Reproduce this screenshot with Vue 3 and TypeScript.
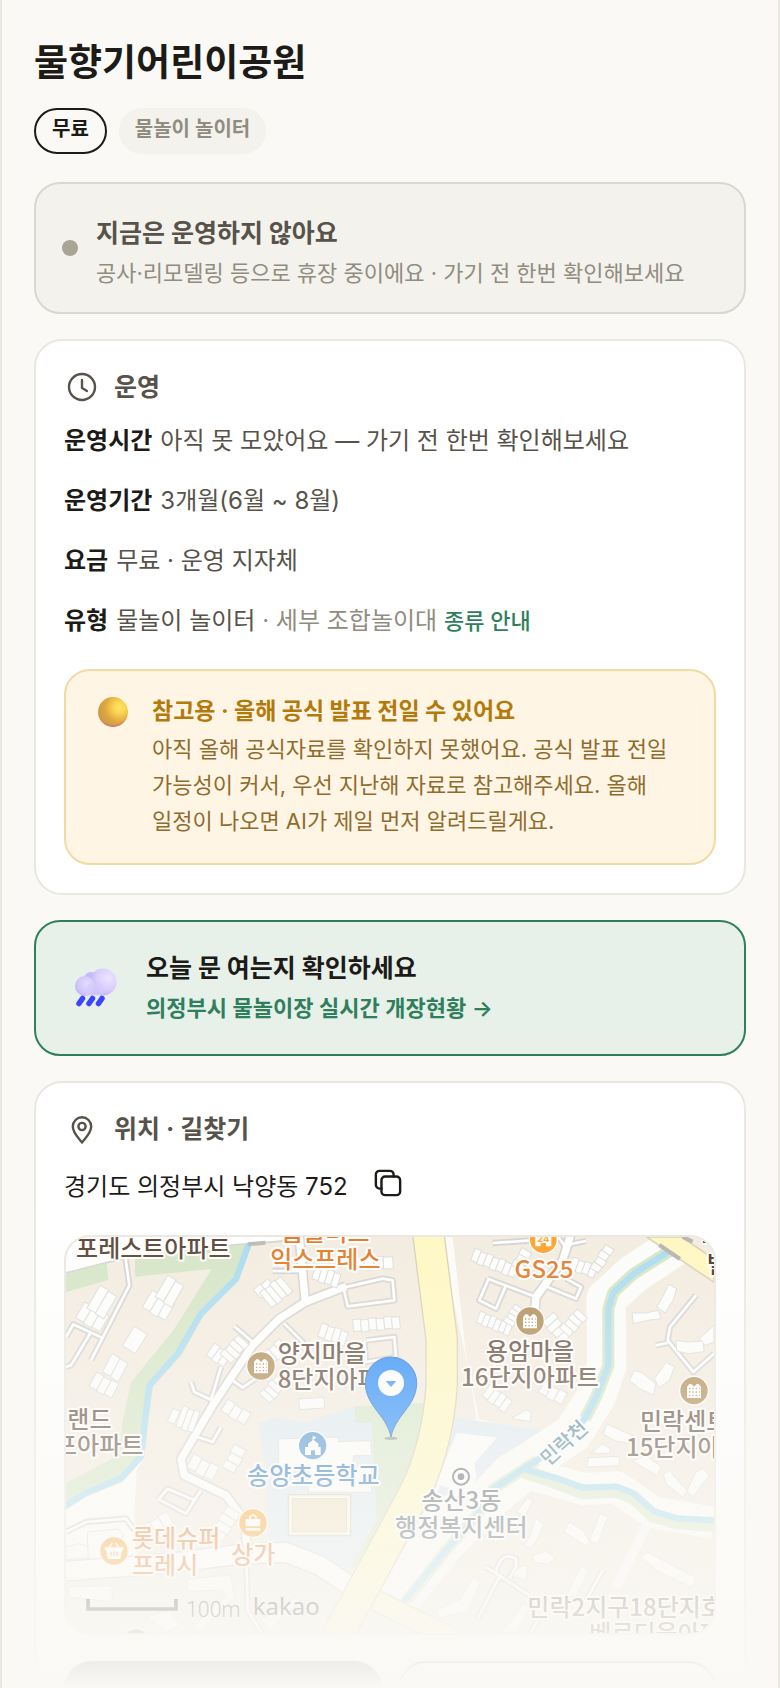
<script setup lang="ts">
import { ref } from 'vue'

interface HouseRow {
  x: number
  y: number
  w: number
  h: number
  n: number
  a: number
}
interface Label {
  x: number
  y: number
  lines: string[]
  color: string
  anchor?: 'start' | 'middle' | 'end'
}

const place = {
  name: '물향기어린이공원',
  address: '경기도 의정부시 낙양동 752',
}

const copied = ref(false)
function copyAddress() {
  navigator.clipboard?.writeText(place.address)
  copied.value = true
}

const lanes: string[] = [
  'M178 60 L190 145 L75 370',
  'M0 300 L22 262 L112 304',
  'M75 285 L15 385 L0 390',
  'M620 102 L702 102',
  'M505 268 L560 315',
  'M655 260 L715 320',
  'M832 150 L845 208 L985 190 L980 130 L950 125 L832 152',
  'M900 310 L985 300 L990 360 L900 375 L895 312',
  'M375 435 L385 465 L435 488 L465 390',
  'M500 430 L530 452 L590 410',
  'M395 600 L440 615 L465 570',
  'M275 790 L305 755 L385 790 L360 830 L280 788',
  'M385 790 L405 760',
  'M0 885 L60 855 L180 845 L205 880',
  'M542 990 L545 1120 L585 1186',
  'M1280 18 L1430 8',
  'M1265 125 L1410 180',
  'M1268 125 L1240 190 L1290 215 L1320 145',
  'M1445 150 L1530 185 L1545 150 L1500 125',
  'M1890 175 L1812 270 L1805 310 L1882 405 L1944 350',
  'M1770 325 L1805 318',
  'M1260 990 L1390 1075',
  'M1305 1010 L1235 1145',
  'M1290 1005 Q1305 940 1350 965 L1350 990 L1330 1025',
  'M1610 1000 L1560 1090',
  'M1425 1130 L1395 1186',
  'M1470 -10 L1495 25 L1560 12',
]

const streets: string[] = [
  'M700 0 L718 195 M718 195 L640 245 L560 325 L440 505 L345 666 L355 715 L480 775 L535 850 L545 950',
  'M718 195 L840 148',
  'M1515 -10 L1490 70 L1410 180 L1405 240',
]

const rows: HouseRow[] = [
  { x: 56, y: 195, w: 84, h: 54, n: 3, a: 30 },
  { x: 102, y: 145, w: 60, h: 78, n: 2, a: 30 },
  { x: 258, y: 160, w: 80, h: 58, n: 3, a: 30 },
  { x: 305, y: 115, w: 58, h: 74, n: 2, a: 30 },
  { x: 205, y: 268, w: 46, h: 68, n: 1, a: 32 },
  { x: 92, y: 405, w: 76, h: 48, n: 3, a: 28 },
  { x: 138, y: 350, w: 56, h: 62, n: 2, a: 28 },
  { x: 562, y: 158, w: 54, h: 34, n: 2, a: -40 },
  { x: 580, y: 168, w: 80, h: 58, n: 4, a: -40 },
  { x: 446, y: 318, w: 62, h: 44, n: 3, a: 35 },
  { x: 462, y: 350, w: 78, h: 44, n: 4, a: -48 },
  { x: 580, y: 470, w: 75, h: 42, n: 4, a: -48 },
  { x: 590, y: 350, w: 66, h: 42, n: 3, a: -42 },
  { x: 750, y: 85, w: 80, h: 42, n: 4, a: 18 },
  { x: 865, y: 62, w: 115, h: 36, n: 4, a: -3 },
  { x: 768, y: 258, w: 84, h: 42, n: 4, a: 18 },
  { x: 860, y: 248, w: 140, h: 36, n: 6, a: -5 },
  { x: 322, y: 514, w: 70, h: 42, n: 3, a: 25 },
  { x: 352, y: 506, w: 54, h: 66, n: 3, a: 20 },
  { x: 486, y: 486, w: 82, h: 40, n: 3, a: 32 },
  { x: 698, y: 486, w: 76, h: 32, n: 1, a: -4 },
  { x: 384, y: 650, w: 86, h: 46, n: 3, a: 28 },
  { x: 468, y: 690, w: 78, h: 40, n: 3, a: -62 },
  { x: 224, y: 868, w: 90, h: 40, n: 3, a: -30 },
  { x: 430, y: 890, w: 100, h: 46, n: 4, a: -58 },
  { x: 1228, y: 34, w: 140, h: 38, n: 7, a: 22 },
  { x: 1336, y: 84, w: 62, h: 34, n: 3, a: -58 },
  { x: 1522, y: 60, w: 78, h: 36, n: 4, a: 20 },
  { x: 1572, y: 92, w: 84, h: 30, n: 4, a: -58 },
  { x: 1244, y: 222, w: 105, h: 36, n: 6, a: 22 },
  { x: 1312, y: 252, w: 62, h: 34, n: 4, a: -58 },
  { x: 1462, y: 226, w: 86, h: 44, n: 4, a: 48 },
  { x: 1480, y: 272, w: 78, h: 40, n: 4, a: -48 },
  { x: 1272, y: 442, w: 84, h: 42, n: 4, a: 35 },
  { x: 1435, y: 432, w: 78, h: 38, n: 3, a: 28 },
]

const buildings: string[] = [
  'M1698 228 L1740 228 L1776 220 L1786 245 L1745 250 L1702 260 Z',
  'M1772 210 L1790 180 L1808 142 L1832 155 L1822 188 L1798 228 Z',
  'M1830 310 L1862 315 L1912 312 L1914 344 L1868 350 L1832 342 Z',
  'M1900 305 L1944 265 L1944 315 L1918 325 Z',
  'M1705 400 L1730 408 L1770 440 L1762 474 L1720 455 L1690 430 Z',
  'M1765 425 L1800 376 L1826 390 L1810 430 L1780 452 Z',
  'M1336 545 L1380 518 L1396 526 L1394 554 Z',
  'M1622 560 L1660 578 L1700 595 L1690 620 L1650 612 L1612 592 Z',
  'M1576 648 L1610 620 L1636 638 L1628 650 Z',
  'M1566 662 L1660 658 L1660 686 L1562 690 Z',
  'M1700 672 L1740 655 L1786 690 L1772 716 Z',
  'M1792 712 L1810 700 L1862 760 L1852 782 L1800 740 Z',
  'M1862 762 L1890 705 L1910 694 L1930 715 L1880 780 Z',
  'M1350 826 L1385 782 L1402 790 L1378 835 Z',
  'M1390 900 L1410 845 L1434 860 L1412 910 L1395 934 L1375 925 Z',
  'M1494 885 L1510 855 L1550 880 L1572 915 L1560 926 Z',
  'M1570 910 L1602 830 L1626 840 L1595 920 Z',
  'M1400 955 L1440 942 L1468 965 L1445 982 L1402 975 Z',
  'M1724 960 L1745 946 L1890 1022 L1880 1052 L1780 1005 Z',
  'M1340 1010 L1370 985 L1386 990 L1378 1030 L1350 1020 Z',
  'M1112 1120 L1185 1085 L1222 1020 L1244 1035 L1205 1125 L1120 1142 Z',
  'M1500 1080 L1545 985 L1568 1000 L1530 1080 Z',
  'M1310 1186 L1370 1100 L1390 1115 L1350 1186 Z',
  'M5 1050 L138 1046 L138 1094 L8 1080 Z',
  'M64 885 L155 876 L170 890 L170 960 L66 966 Z',
  'M0 930 L40 920 L66 930 L66 962 L0 968 Z',
  'M365 1026 L495 1014 L505 1080 L400 1186 L380 1170 L478 1080 L470 1060 L365 1062 Z',
  'M242 1140 L310 1120 L345 1165 L300 1186 Z',
  'M585 1150 L690 1080 L702 1090 L610 1180 Z',
]

const apartmentColor = '#5d4637'
const shopColor = '#e1741b'

const labels: Label[] = [
  { x: 262, y: 60, lines: ['포레스트아파트'], color: '#553c2d', anchor: 'middle' },
  { x: 778, y: 12, lines: ['홈플러스', '익스프레스'], color: shopColor, anchor: 'middle' },
  { x: 635, y: 374, lines: ['양지마을', '8단지아파트'], color: apartmentColor },
  { x: 1434, y: 122, lines: ['GS25'], color: shopColor, anchor: 'middle' },
  { x: 1392, y: 368, lines: ['용암마을', '16단지아파트'], color: apartmentColor, anchor: 'middle' },
  { x: 1722, y: 578, lines: ['민락센트럴'], color: apartmentColor },
  { x: 1680, y: 658, lines: ['15단지아파트'], color: apartmentColor },
  { x: 4, y: 572, lines: ['랜드'], color: apartmentColor },
  { x: 232, y: 652, lines: ['에코프아파트'], color: apartmentColor, anchor: 'end' },
  { x: 742, y: 742, lines: ['송양초등학교'], color: '#2272bd', anchor: 'middle' },
  { x: 1186, y: 816, lines: ['송산3동', '행정복지센터'], color: '#4d5a64', anchor: 'middle' },
  { x: 198, y: 930, lines: ['롯데슈퍼', '프레시'], color: shopColor },
  { x: 562, y: 978, lines: ['상가'], color: shopColor, anchor: 'middle' },
  { x: 1384, y: 1136, lines: ['민락2지구18단지호반'], color: apartmentColor },
  { x: 1570, y: 1216, lines: ['베르디움아파트'], color: apartmentColor },
]

const apartments = [
  { x: 585, y: 387 },
  { x: 1392, y: 252 },
  { x: 1884, y: 461 },
  { x: 210, y: 1218 },
]
</script>

<template>
  <main class="page">
    <header class="intro">
      <h1>{{ place.name }}</h1>
      <ul class="chips">
        <li class="chip chip-strong">무료</li>
        <li class="chip">물놀이 놀이터</li>
      </ul>
    </header>

    <section class="status">
      <span class="dot"></span>
      <div class="status-text">
        <h2>지금은 운영하지 않아요</h2>
        <p>공사·리모델링 등으로 휴장 중이에요 · 가기 전 한번 확인해보세요</p>
      </div>
    </section>

    <section class="card">
      <h2 class="card-title">
        <svg viewBox="0 0 36 36" aria-hidden="true">
          <circle cx="18" cy="18" r="13" />
          <path d="M18 11v8l5 3" />
        </svg>
        운영
      </h2>
      <dl class="facts">
        <div>
          <dt>운영시간</dt>
          <dd>아직 못 모았어요 — 가기 전 한번 확인해보세요</dd>
        </div>
        <div>
          <dt>운영기간</dt>
          <dd>3개월(6월 ~ 8월)</dd>
        </div>
        <div>
          <dt>요금</dt>
          <dd>무료 · 운영 지자체</dd>
        </div>
        <div>
          <dt>유형</dt>
          <dd>물놀이 놀이터 <span class="muted">· 세부 조합놀이대</span> <a href="#types">종류 안내</a></dd>
        </div>
      </dl>
      <aside class="notice">
        <svg class="ball" viewBox="0 0 30 30" aria-hidden="true">
          <defs>
            <radialGradient id="ballBase" cx="0.72" cy="0.35" r="0.75">
              <stop offset="0" stop-color="#ffe562" />
              <stop offset="0.25" stop-color="#fbd654" />
              <stop offset="0.65" stop-color="#dfa73f" />
              <stop offset="1" stop-color="#c99a4e" />
            </radialGradient>
            <radialGradient id="ballShade" cx="0.5" cy="0.32" r="0.7">
              <stop offset="0.82" stop-color="#cc6a6a" stop-opacity="0" />
              <stop offset="1" stop-color="#cc6a70" stop-opacity="0.9" />
            </radialGradient>
          </defs>
          <circle cx="15" cy="15" r="15" fill="url(#ballBase)" />
          <circle cx="15" cy="15" r="15" fill="url(#ballShade)" />
        </svg>
        <div>
          <h3>참고용 · 올해 공식 발표 전일 수 있어요</h3>
          <p>아직 올해 공식자료를 확인하지 못했어요. 공식 발표 전일 가능성이 커서, 우선 지난해 자료로 참고해주세요. 올해 일정이 나오면 AI가 제일 먼저 알려드릴게요.</p>
        </div>
      </aside>
    </section>

    <a class="live" href="#live">
      <svg class="cloud" viewBox="0 0 44 40" aria-hidden="true">
        <defs>
          <radialGradient id="cloudBig" cx="0.7" cy="0.35" r="0.75">
            <stop offset="0" stop-color="#eee4ff" />
            <stop offset="0.6" stop-color="#d8cdfb" />
            <stop offset="1" stop-color="#b9aef6" />
          </radialGradient>
          <radialGradient id="cloudSmall" cx="0.6" cy="0.4" r="0.7">
            <stop offset="0" stop-color="#e6dcff" />
            <stop offset="0.7" stop-color="#cfc5fb" />
            <stop offset="1" stop-color="#b4acf5" />
          </radialGradient>
        </defs>
        <circle cx="17" cy="11" r="7" fill="#c4bbfb" />
        <path d="M11 17h18v10H11z" fill="#cbc1fa" />
        <circle cx="29" cy="14" r="13.5" fill="url(#cloudBig)" />
        <circle cx="11" cy="18" r="10" fill="url(#cloudSmall)" />
        <path d="M14 16h15v11.500H12z" fill="#d5cbfc" opacity="0.7" />
        <path
          d="M8.500 30.500l-3.500 5M18.500 30.500l-3.500 5M28 30.500l-3.500 5"
          stroke="#3b46ff"
          stroke-width="5.500"
          stroke-linecap="round"
        />
      </svg>
      <span class="live-text">
        <strong>오늘 문 여는지 확인하세요</strong>
        <span>의정부시 물놀이장 실시간 개장현황 →</span>
      </span>
    </a>

    <section class="card">
      <h2 class="card-title">
        <svg viewBox="0 0 36 36" aria-hidden="true">
          <path d="M18 31.500C15 27.500 8.800 22 8.800 15.500a9.200 9.200 0 0 1 18.400 0C27.200 22 21 27.500 18 31.500z" />
          <circle cx="18" cy="15.500" r="3.600" />
        </svg>
        위치 · 길찾기
      </h2>
      <p class="address">
        {{ place.address }}
        <button class="copy" type="button" :aria-label="copied ? '복사됨' : '주소 복사'" @click="copyAddress">
          <svg viewBox="0 0 30 30" aria-hidden="true">
            <path d="M8 21H6a4 4 0 0 1-4-4V6a4 4 0 0 1 4-4h11a4 4 0 0 1 4 4v2" />
            <rect x="8" y="8" width="20" height="20" rx="4" />
          </svg>
        </button>
      </p>

      <div class="map">
        <svg viewBox="0 0 1944 1188" preserveAspectRatio="xMidYMid slice" role="img" aria-label="지도">
          <rect width="1944" height="1188" fill="#f3ebdf" />
          <path d="M0 1010 L520 975 L700 965 L860 1050 L760 1188 L0 1188Z" fill="#f0ece2" />

          <path d="M0 0 H900 L700 8 L505 24 L180 62 L0 108Z" fill="#fff" />
          <path d="M0 108 L180 62 L505 24 L700 8" fill="none" stroke="#d6d4d1" stroke-width="6" />
          <path d="M0 112 L122 78 L127 128 L0 166Z" fill="#d3e4c4" />
          <path
            d="M207 56 L505 26 L557 20 L517 126 L412 236 L347 354 L262 446 L248 540 L236 660 L170 735 L52 782 L0 818 L0 738 L130 670 L162 640 L168 560 L195 436 L325 276 L437 96 L207 119Z"
            fill="#d3e4c4"
          />
          <path d="M0 818 L52 782 L170 735 L236 660 L212 700 L204 840 L215 960 L0 980Z" fill="#fdfdfb" />
          <path
            d="M548 22 L510 126 L405 230 L335 350 L250 446 L238 540 L224 660 L168 722 L60 768 L0 806"
            class="water"
          />
          <path d="M545 22 L598 17" stroke="#b9b7b3" stroke-width="12" />

          <path
            d="M577 560 L622 542 L720 556 L867 508 L940 508 L930 850 L860 1000 L700 935 L608 920 L602 720Z"
            fill="#dfe9f1"
          />
          <path
            d="M867 508 L1078 498 L1067 566 L1035 680 L1002 756 L880 996 L852 990 L932 850 L925 700 L918 558 L867 558Z"
            fill="#d6e6c8"
          />
          <path d="M638 606 L817 600 L817 614 L914 611 L917 656 L862 656 L862 686 L917 686 L917 766 L727 766 L727 700 L638 700Z" fill="#fdfdfc" stroke="#dcdcdc" stroke-width="3" />
          <rect x="667" y="773" width="187" height="123" fill="#fbf8ef" stroke="#d9ccb0" stroke-width="4" />
          <rect x="679" y="785" width="163" height="99" fill="#efe2c2" stroke="#e3d3ab" stroke-width="3" />

          <path d="M1120 0 H1160 L1200 350 L1232 546 L1180 560 L1100 780 L940 1070 L1040 1120 L1300 830 L1440 600 L1240 546Z" fill="#fcfbf8" />
          <path d="M1167 541 L1432 581 L1300 660 L1232 730 L1110 790 L1150 640Z" fill="#dfe9f1" />
          <path d="M1172 588 L1292 602 L1225 680 L1232 720 L1200 770 L1110 740Z" fill="#fdfdfc" />

          <g fill="none" stroke-linejoin="round">
            <path d="M1840 20 L1702 111 L1620 186 L1622 386 L1592 476 L1520 590 L1412 660" stroke="#fcfcfa" stroke-width="118" />
            <path d="M1412 690 L1290 790 L1152 926 L1022 1086" stroke="#fcfcfa" stroke-width="90" />
            <path d="M1372 706 L1552 756 L1652 751 L1762 826 L1944 858" stroke="#fcfcfa" stroke-width="96" />
            <path d="M1752 846 L1650 1050" stroke="#fbfaf6" stroke-width="26" />
            <path d="M1822 35 L1702 111 L1642 166 L1627 216 L1627 386 L1592 476 L1557 545" stroke="#d3e4c4" stroke-width="36" />
            <path d="M1412 671 L1282 756 L1232 836 L1152 926 L1022 1090" stroke="#dce8cb" stroke-width="34" />
            <path d="M1372 702 L1472 736 L1552 766 L1652 761 L1702 781 L1762 836 L1832 856 L1944 864" stroke="#dce8cb" stroke-width="42" />
            <path d="M1822 35 L1702 111 L1642 166 L1627 216 L1627 386 L1592 476 L1557 545 L1500 610 L1412 671 L1372 696 L1282 756 L1232 836 L1152 926 L1012 1096" class="water" />
            <path d="M1372 696 L1472 724 L1552 752 L1652 749 L1702 769 L1762 822 L1832 844 L1944 850" class="water" />
          </g>

          <path d="M1742 0 H1847 L1944 66 V136Z" fill="#fff6bd" stroke="#d8d0b4" stroke-width="5" />
          <path d="M1780 24 L1842 66 M1850 0 L1880 14" stroke="#b3b0ab" stroke-width="12" />

          <path d="M0 1002 L300 980 L520 952 L660 946 L760 985 L880 1065" class="avenue-edge" />
          <path d="M0 1002 L300 980 L520 952 L660 946 L760 985 L880 1065" class="avenue" />

          <path v-for="d in lanes" :key="`edge-${d}`" :d="d" class="lane-edge" />
          <path v-for="d in streets" :key="`edge-${d}`" :d="d" class="street-edge" />
          <path v-for="d in lanes" :key="d" :d="d" class="lane" />
          <path v-for="d in streets" :key="d" :d="d" class="street" />

          <path
            d="M1087 -10 L1127 306 L1127 446 Q1115 620 1052 755 L940 965 L812 1200"
            fill="none"
            stroke="#d6cdb4"
            stroke-width="98"
          />
          <path d="M930 1090 L1170 1210" fill="none" stroke="#d6cdb4" stroke-width="66" />
          <path d="M930 1090 L1170 1210" fill="none" stroke="#fff5c4" stroke-width="58" />
          <path d="M1087 -10 L1127 306 L1127 446 Q1115 620 1052 755 L940 965 L812 1200" fill="none" stroke="#fff8c0" stroke-width="90" />

          <g class="building">
            <g v-for="(r, i) in rows" :key="i" :transform="`translate(${r.x} ${r.y}) rotate(${r.a})`">
              <rect
                v-for="k in r.n"
                :key="k"
                :x="((k - 1) * r.w) / r.n"
                :y="k % 2 ? 0 : 3"
                :width="r.w / r.n"
                :height="r.h"
              />
            </g>
            <path v-for="d in buildings" :key="d" :d="d" />
          </g>

          <g v-for="p in apartments" :key="`${p.x}-${p.y}`" :transform="`translate(${p.x} ${p.y})`">
            <circle r="43" fill="#ad8850" stroke="#fff" stroke-width="4" />
            <path d="M-21 22V-12L-14 -20H-8L0 -12L8 -20H14L21 -12V22Z" fill="#fff" />
            <path d="M-15 -6H17M-15 4H17M-15 14H17" stroke="#ad8850" stroke-width="4" stroke-dasharray="4 6" />
          </g>

          <g transform="translate(1432 8)">
            <circle r="42" fill="#fb9f23" stroke="#fff" stroke-width="4" />
            <path d="M-24 -40H24V20H8V10H-8V20H-24Z" fill="#fff" />
            <text class="shop-num" y="8" text-anchor="middle">24</text>
          </g>
          <g transform="translate(740 626)">
            <circle r="43" fill="#4a90cf" stroke="#fff" stroke-width="4" />
            <path d="M-23 28V4H-14V-6L2 -18L17 -6V4H24V28H7V14H-5V28Z" fill="#fff" />
            <path d="M1 -14V-28L10 -24L1 -20" fill="#fff" stroke="#fff" stroke-width="3" />
          </g>
          <g transform="translate(561 858)">
            <circle r="43" fill="#fb9f23" stroke="#fff" stroke-width="4" />
            <path d="M-22 -12H22V10H-22ZM-22 15H22V23H-22Z" fill="#fff" />
            <path d="M-9 -12V-18Q0 -30 9 -18V-12" fill="none" stroke="#fff" stroke-width="5" />
          </g>
          <g transform="translate(144 942)">
            <circle r="43" fill="#fb9f23" stroke="#fff" stroke-width="4" />
            <path d="M-28 -11H28V-3H24L19 24H-19L-24 -3H-28Z" fill="#fff" />
            <path d="M-14 -11L-5 -24M14 -11L5 -24" stroke="#fff" stroke-width="5" />
            <path d="M-9 2V14M0 2V14M9 2V14" stroke="#fb9f23" stroke-width="4" />
          </g>
          <g transform="translate(1185 719)">
            <circle r="24" fill="#fff" stroke="#59626a" stroke-width="6" />
            <circle r="10" fill="#59626a" />
          </g>

          <g class="labels">
            <text
              v-for="l in labels"
              :key="l.lines[0]"
              :x="l.x"
              :y="l.y"
              :fill="l.color"
              :text-anchor="l.anchor ?? 'start'"
            >
              <tspan v-for="(line, i) in l.lines" :key="line" :x="l.x" :dy="i ? 80 : 0">{{ line }}</tspan>
            </text>
            <text class="stream" text-anchor="middle" transform="translate(1508 634) rotate(-42)">민락천</text>
            <text x="1908" y="18" fill="#3d2a20">보</text>
            <text x="1922" y="108" fill="#3d2a20">별</text>
          </g>

          <g transform="translate(975 600)">
            <ellipse cx="0" cy="4" rx="20" ry="5" fill="#5b6470" opacity="0.6" />
            <path
              d="M0 0C-14 -68 -77 -92 -77 -163A77 77 0 0 1 77 -163C77 -92 14 -68 0 0Z"
              fill="#2288fa"
              stroke="#1f68c4"
              stroke-width="3"
            />
            <circle cy="-162" r="39" fill="#fff" />
            <path d="M-16 -168H16L0 -150Z" fill="#2f8ffa" />
          </g>

          <path d="M66 1086V1116H330V1086" fill="none" stroke="#222" stroke-width="11" />
          <text class="scale" x="360" y="1140">100m</text>
          <text class="brand" x="560" y="1134">kakao</text>
        </svg>
      </div>

      <div class="actions">
        <button class="action action-main" type="button">길찾기</button>
        <button class="action" type="button">지도 보기</button>
      </div>
    </section>
    <div class="fade"></div>
  </main>
</template>

<style>
body {
  background: #faf9f5;
}
</style>

<style scoped>
.page {
  --ink: #1c1b18;
  --soft: #57534a;
  --muted: #918c80;
  --line: #e9e7e0;
  --green: #2f7f5d;
  position: relative;
  box-sizing: border-box;
  display: flex;
  flex-direction: column;
  gap: 25px;
  height: 100vh;
  padding: 32px;
  overflow: hidden;
  border: solid var(--line);
  border-width: 0 2px;
  background: #faf9f5;
  color: var(--ink);
  font-family: Inter, 'Noto Sans CJK KR', sans-serif;
  font-size: 24px;
  line-height: 36px;
  word-break: keep-all;
}
.page > * {
  flex: none;
}
h1,
h2,
h3,
p,
ul,
dl,
dd {
  margin: 0;
  padding: 0;
}
h1 {
  font-size: 37px;
  font-weight: 700;
  line-height: 62px;
}
.intro {
  display: flex;
  flex-direction: column;
  gap: 14px;
  padding-bottom: 3px;
}
.chips {
  display: flex;
  gap: 12px;
  list-style: none;
}
.chip {
  box-sizing: border-box;
  height: 46px;
  padding: 0 16px;
  border-radius: 23px;
  background: #f3f2ec;
  color: var(--muted);
  font-size: 20px;
  font-weight: 600;
  line-height: 42px;
}
.chip-strong {
  border: 2px solid var(--ink);
  background: none;
  color: var(--ink);
  font-weight: 700;
  line-height: 38px;
}
.status {
  display: flex;
  align-items: center;
  gap: 18px;
  padding: 20px 26px;
  border: 2px solid #d9d8d0;
  border-radius: 26px;
  background: #f3f2ec;
}
.status-text {
  padding-top: 8px;
}
.status h2 {
  color: var(--soft);
  font-size: 25px;
  font-weight: 700;
  line-height: 42px;
}
.status p {
  color: var(--muted);
  font-size: 22px;
  line-height: 38px;
}
.dot {
  flex: none;
  width: 16px;
  height: 16px;
  border-radius: 50%;
  background: #a8a496;
}
.card {
  padding: 28px;
  border: 2px solid var(--line);
  border-radius: 28px;
  background: #fff;
}
.card-title {
  display: flex;
  align-items: center;
  gap: 14px;
  color: var(--soft);
  font-size: 25px;
  font-weight: 700;
}
.card-title svg {
  width: 36px;
  height: 36px;
  fill: none;
  stroke: currentColor;
  stroke-width: 2.4;
  stroke-linecap: round;
  stroke-linejoin: round;
}
.facts {
  display: flex;
  flex-direction: column;
  gap: 20px;
  margin-top: 16px;
  line-height: 40px;
}
.facts dt,
.facts dd {
  display: inline;
}
.facts dt {
  margin-right: 8px;
  font-weight: 700;
}
.facts dd {
  color: var(--soft);
}
.facts .muted {
  color: var(--muted);
}
.facts a {
  color: var(--green);
  font-size: 22px;
  font-weight: 500;
  text-decoration: none;
}
.notice {
  display: flex;
  gap: 24px;
  margin-top: 28px;
  padding: 20px 32px 24px;
  border: 2px solid #f0dba5;
  border-radius: 26px;
  background: #fff5e5;
}
.ball {
  flex: none;
  width: 30px;
  height: 30px;
  margin-top: 6px;
}
.notice h3 {
  color: #b37a0b;
  font-size: 23px;
  font-weight: 700;
  line-height: 40px;
}
.notice p {
  color: #8f6c2d;
  font-size: 22px;
  line-height: 36px;
}
.live {
  display: flex;
  align-items: center;
  gap: 28px;
  padding: 26px 38px;
  border: 2px solid var(--green);
  border-radius: 26px;
  background: #e8f0ea;
  color: var(--green);
  text-decoration: none;
}
.cloud {
  flex: none;
  width: 44px;
  height: 40px;
}
.live-text {
  display: flex;
  flex-direction: column;
  font-size: 22px;
  font-weight: 600;
  line-height: 40px;
}
.live-text strong {
  color: var(--ink);
  font-size: 25px;
  font-weight: 700;
}
.address {
  display: flex;
  align-items: flex-start;
  gap: 26px;
  margin-top: 22px;
}
.copy {
  display: flex;
  padding: 0;
  border: 0;
  background: none;
  color: var(--ink);
}
.copy svg {
  width: 28px;
  height: 28px;
  fill: none;
  stroke: currentColor;
  stroke-width: 2.6;
  stroke-linecap: round;
}
.map {
  height: 396px;
  margin-top: 30px;
  overflow: hidden;
  border: 2px solid var(--line);
  border-radius: 26px;
}
.map svg {
  display: block;
  width: 100%;
  height: 100%;
}
.water {
  fill: none;
  stroke: #a6daef;
  stroke-width: 19;
}
.lane-edge,
.street-edge,
.lane,
.street,
.avenue,
.avenue-edge {
  fill: none;
  stroke: #d3d2d0;
  stroke-width: 19;
  stroke-linejoin: round;
}
.lane {
  stroke: #fff;
  stroke-width: 8;
}
.street-edge {
  stroke-width: 32;
}
.street {
  stroke: #fff;
  stroke-width: 22;
}
.avenue-edge {
  stroke-width: 64;
}
.avenue {
  stroke: #fff;
  stroke-width: 56;
}
.building {
  fill: #fdfdfc;
  stroke: #dadad8;
  stroke-width: 3;
}
.labels {
  font-family: 'Noto Sans CJK KR', sans-serif;
  font-size: 72px;
  font-weight: 500;
  paint-order: stroke;
  stroke: #fff;
  stroke-width: 12;
  stroke-linejoin: round;
}
.stream {
  fill: #4c8398;
  font-size: 60px;
}
.shop-num {
  fill: #fb9f23;
  font-size: 28px;
  font-weight: 700;
}
.scale {
  fill: #222;
  font-family: Roboto, sans-serif;
  font-size: 64px;
  font-weight: 300;
}
.brand {
  fill: #222;
  font-family: 'Noto Sans', sans-serif;
  font-size: 72px;
}
.actions {
  display: grid;
  grid-template-columns: 1fr 1fr;
  gap: 16px;
  margin-top: 26px;
}
.action {
  height: 92px;
  border: 2px solid var(--green);
  border-radius: 28px;
  background: #fff;
  color: var(--green);
  font: inherit;
}
.action-main {
  border-color: var(--ink);
  background: var(--ink);
  color: #fff;
}
.fade {
  position: absolute;
  right: 0;
  bottom: 0;
  left: 0;
  height: 29vh;
  background: linear-gradient(rgba(250, 249, 245, 0), #faf9f5);
  pointer-events: none;
}
</style>
